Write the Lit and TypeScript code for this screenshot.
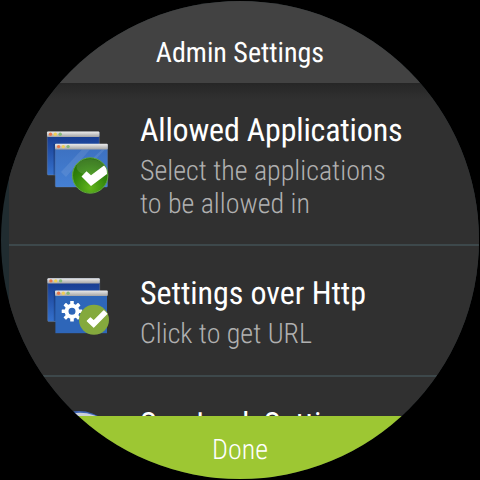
import { LitElement, html, css, svg } from "lit";
import { customElement } from "lit/decorators.js";

const windowsBack = svg`
  <rect x="11.3" y="12" width="52" height="43" rx="1" fill="url(#deep)" stroke="#8592a8" stroke-width=".6" stroke-opacity=".6" />
  <rect x="11" y="11.6" width="52.4" height="5.4" rx="1" fill="url(#bar)" />
  <circle cx="14.5" cy="14.3" r="1.7" fill="#e8774a" />
  <circle cx="19.3" cy="14.3" r="1.7" fill="#f0cf55" />
  <circle cx="24.2" cy="14.3" r="1.7" fill="#86b878" />`;

const gradients = svg`
  <defs>
    <linearGradient id="deep" x1="0" y1="0" x2="0" y2="1">
      <stop offset=".1" stop-color="#183d92" /><stop offset="1" stop-color="#3571cc" />
    </linearGradient>
    <linearGradient id="front" x1="0" y1="0" x2="0" y2="1">
      <stop offset="0" stop-color="#3c70c0" /><stop offset="1" stop-color="#4580d4" />
    </linearGradient>
    <linearGradient id="bar" x1="0" y1="0" x2="0" y2="1">
      <stop offset="0" stop-color="#ededed" /><stop offset="1" stop-color="#a4a4a4" />
    </linearGradient>
    <radialGradient id="ball" cx=".5" cy=".85" r=".8">
      <stop offset="0" stop-color="#62b41c" /><stop offset=".6" stop-color="#32860c" /><stop offset="1" stop-color="#256b08" />
    </radialGradient>
  </defs>`;

const frontBar = (y: number) => svg`
  <rect x="19" y=${y} width="52.8" height="5.6" rx="1" fill="url(#bar)" />
  <circle cx="22.6" cy=${y + 2.8} r="1.7" fill="#e8774a" />
  <circle cx="27.3" cy=${y + 2.8} r="1.7" fill="#f0cf55" />
  <circle cx="32.1" cy=${y + 2.8} r="1.7" fill="#86b878" />`;

const appsIcon = html`<svg viewBox="0 0 84 84" width="84" height="84">
  ${gradients}${windowsBack}
  <rect x="17.5" y="24" width="3" height="31" fill="#0c2048" opacity=".35" />
  <rect x="19.3" y="24.5" width="52.2" height="42.6" rx="1" fill="url(#front)" stroke="#6f8db8" stroke-width=".6" stroke-opacity=".5" />
  <path d="M25 52L46 29.5H54L30 57ZM37 57L66 29.5H69L41 59Z" fill="#fff" opacity=".09" />
  ${frontBar(23.8)}
  <circle cx="54.2" cy="55.5" r="17.7" fill="url(#ball)" stroke="#5fa63c" stroke-width="1" />
  <ellipse cx="54" cy="47" rx="13.5" ry="8" fill="#fff" opacity=".12" />
  <path d="M45.5 56.5L50.5 51.2L55 55.3L68 45.5Q71.4 48.5 71 54L55 66Z" fill="#fff" />
</svg>`;

const teeth = [0, 45, 90, 135, 180, 225, 270, 315];

const httpIcon = html`<svg viewBox="0 0 84 84" width="84" height="84">
  ${gradients}<g transform="translate(.4 -1.4)">${windowsBack}</g>
  <rect x="17.8" y="23" width="3" height="30" fill="#0c2048" opacity=".35" />
  <rect x="19.4" y="23" width="51.6" height="42.2" fill="#2e66b9" />
  ${frontBar(22.4)}
  <g transform="translate(36 43.3)" fill="#fff">
    <circle r="5.5" fill="none" stroke="#fff" stroke-width="4" />
    ${teeth.map((a) => svg`<rect x="-1.8" y="-10.3" width="3.6" height="4.2" rx=".5" transform="rotate(${a})" />`)}
  </g>
  <circle cx="58" cy="51.8" r="15" fill="#84a93d" />
  <path d="M51.5 53L54.3 50.2L57.6 53.2L67.8 43L70.6 45.8L57.8 58.8Z" fill="#fff" stroke="#fff" stroke-width="1.6" stroke-linejoin="round" />
</svg>`;

const lockIcon = html`<svg viewBox="0 0 84 84" width="84" height="84">
  <ellipse cx="43" cy="44" rx="35" ry="32" fill="#3f66b8" />
  <ellipse cx="44" cy="45.8" rx="36" ry="32" fill="#ccd0da" />
</svg>`;

@customElement("app-root")
export class AppRoot extends LitElement {
  static styles = css`
    :host {
      display: block;
      width: 480px;
      height: 480px;
      background: #000;
      overflow: hidden;
    }
    .face {
      display: flex;
      flex-direction: column;
      height: 480px;
      box-sizing: border-box;
      background: #202c30;
      clip-path: circle(239px at 240px 240px);
      font-family: "Roboto Condensed", Roboto, "Liberation Sans", sans-serif;
      font-stretch: 75%;
      font-weight: 385;
      text-rendering: geometricPrecision;
      color: #fff;
    }
    .top {
      flex: none;
      height: 83px;
      line-height: 33px;
      padding-top: 36px;
      box-sizing: border-box;
      background: #424242;
      text-align: center;
      font-size: 28px;
    }
    .list {
      flex: 1;
      min-height: 0;
      overflow: hidden;
      margin-left: 9px;
      background: linear-gradient(#262626, #303030 16px);
    }
    .row {
      display: flex;
      box-sizing: border-box;
      border-bottom: 2px solid #3d484b;
      height: 131px;
    }
    .tall {
      height: 163px;
    }
    .icon {
      flex: none;
      width: 84px;
      padding: 22px 0 0 27px;
    }
    .tall .icon {
      padding-top: 37px;
    }
    .icon svg {
      display: block;
    }
    .copy {
      padding: 28px 0 0 20px;
    }
    .title {
      font-size: 32px;
      line-height: 38px;
      letter-spacing: -0.06px;
      white-space: nowrap;
    }
    .tall .title {
      letter-spacing: -0.18px;
    }
    .text {
      margin-top: 5px;
      width: 260px;
      font-size: 28px;
      line-height: 33px;
      font-weight: 300;
      color: #b0b0b0;
    }
    .done {
      flex: none;
      height: 64px;
      padding-top: 17px;
      box-sizing: border-box;
      background: #9dc733;
      text-align: center;
      font-size: 28px;
      line-height: 33px;
      font-weight: 300;
    }
  `;

  render() {
    return html`<div class="face">
      <div class="top">Admin Settings</div>
      <div class="list">
        <div class="row tall">
          <div class="icon">${appsIcon}</div>
          <div class="copy">
            <div class="title">Allowed Applications</div>
            <div class="text">Select the applications to be allowed in</div>
          </div>
        </div>
        <div class="row">
          <div class="icon">${httpIcon}</div>
          <div class="copy">
            <div class="title">Settings over Http</div>
            <div class="text">Click to get URL</div>
          </div>
        </div>
        <div class="row">
          <div class="icon">${lockIcon}</div>
          <div class="copy"><div class="title">SureLock Settings</div></div>
        </div>
      </div>
      <div class="done">Done</div>
    </div>`;
  }
}
